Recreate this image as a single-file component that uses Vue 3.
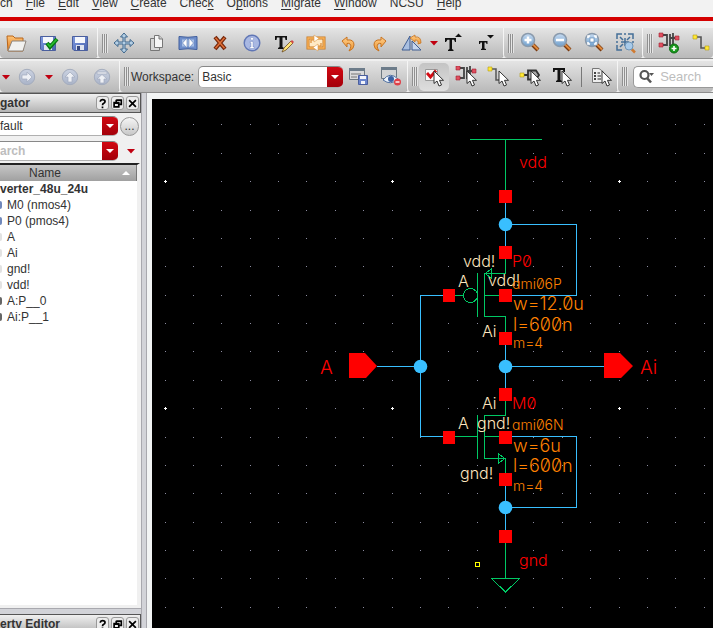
<script setup>
import { ref } from 'vue'

const menus = [
  ['', 'ch', ''], ['', 'F', 'ile'], ['', 'E', 'dit'], ['', 'V', 'iew'], ['', 'C', 'reate'],
  ['Chec', 'k', ''], ['O', 'p', 'tions'], ['', 'M', 'igrate'], ['', 'W', 'indow'],
  ['NCSU', '', ''], ['', 'H', 'elp'],
]
const mainBar = [
  { items: ['open', 'savecheck', 'save'] },
  { grip: true, items: ['move', 'copy', 'stretch', 'delete', 'info', 'edittext', 'repeat', 'undo', 'redo', 'rotate', 'tri', 'textup', 'textdown'] },
  { grip: true, items: ['zoomin', 'zoomout', 'zoomfit', 'zoomsel'] },
  { grip: true, grow: true, items: ['instance', 'wire'] },
]
const navItems = ['tri', 'forward', 'tri', 'up', 'top']
const filterItems = ['fcheck', 'finst', 'fwire', 'fpin', 'ftext']
const tree = [
  ['M0 (nmos4)', 'blue'], ['P0 (pmos4)', 'blue'], ['A', 'pale'], ['Ai', 'pale'], ['gnd!', 'pale'],
  ['vdd!', 'pale'], ['A:P__0', 'dark'], ['Ai:P__1', 'dark'],
]
const workspace = ref('Basic')
const view = ref('fault')
const search = ref('')
const filter = ref('')

const pitch = 28.375
const dots = []
for (let i = 0; i < 60; i++) {
  for (let j = -2; j < 40; j++) {
    dots.push({
      x: Math.floor(165.03 + i * pitch),
      y: Math.floor(181.65 + j * pitch),
      major: i % 8 === 0 && ((j % 8) + 8) % 8 === 0,
    })
  }
}
const squares = [
  [499, 190], [499, 246], [499, 289], [499, 332], [443, 289], [499, 388],
  [443, 431], [499, 431], [499, 473], [499, 530],
]
const nodes = [[505.5, 224.5], [420.5, 366.5], [505.5, 366.5], [505.5, 507.5]]
const labels = [
  ['vdd', 519, 168, 'red'], ['P0', 512, 267, 'red'], ['M0', 512, 409, 'red'], ['gnd', 519, 566, 'red'],
  ['A', 320, 374, 'red big'], ['Ai', 640, 374, 'red big'],
  ['vdd!', 463, 267, 'cream'], ['vdd!', 488, 286, 'cream'], ['A', 458, 287, 'cream'], ['Ai', 482, 337, 'cream'],
  ['Ai', 482, 409, 'cream'], ['A', 458, 429, 'cream'], ['gnd!', 477, 429, 'cream'], ['gnd!', 460, 479, 'cream'],
  ['ami06P', 512, 289, 'orange small'], ['w=12.0u', 513, 310, 'orange'], ['l=600n', 513, 331, 'orange'], ['m=4', 513, 348, 'orange small'],
  ['ami06N', 512, 430, 'orange small'], ['w=6u', 513, 452, 'orange'], ['l=600n', 513, 472, 'orange'], ['m=4', 513, 491, 'orange small'],
]
</script>

<template>
  <div class="app">
    <svg class="defs" aria-hidden="true">
      <defs>
        <linearGradient id="gFolder" x1="0" y1="0" x2="0" y2="1"><stop offset="0" stop-color="#ffc477" /><stop offset="1" stop-color="#e07a1c" /></linearGradient>
        <linearGradient id="gDisk" x1="0" y1="0" x2="1" y2="1"><stop offset="0" stop-color="#7f9ae0" /><stop offset="1" stop-color="#4a64ae" /></linearGradient>
        <linearGradient id="gLens" x1="0" y1="0" x2="0" y2="1"><stop offset="0" stop-color="#c8dcf2" /><stop offset="1" stop-color="#6f9fcc" /></linearGradient>
        <linearGradient id="gPale" x1="0" y1="0" x2="0" y2="1"><stop offset="0" stop-color="#ccd3e2" /><stop offset="1" stop-color="#a9b3c8" /></linearGradient>
        <linearGradient id="gOrange" x1="0" y1="0" x2="0" y2="1"><stop offset="0" stop-color="#ffce8a" /><stop offset="1" stop-color="#ee9630" /></linearGradient>
        <g id="pointer"><path d="M0 0V12.5L3 10L5 15L7.5 14L5.5 9.3H9.5Z" fill="#fff" stroke="#333" stroke-width="1" /></g>
        <g id="lens"><path d="M12 12L18 18" stroke="#7a3a10" stroke-width="4" /><path d="M12.5 12L18 17.5" stroke="#e08a3c" stroke-width="2" /><circle cx="8" cy="8" r="6.5" fill="url(#gLens)" stroke="#8a9aac" stroke-width="1.5" /></g>
        <g id="inst"><path d="M4 4H9V14H4M12 3V15M15 2V16M12 7H20" fill="none" stroke="#444" stroke-width="1.800" /><path d="M1 2h4v4H1zM1 12h4v4H1zM17 5h4v4h-4z" fill="#e05060" stroke="#a02030" stroke-width=".6" /></g>
      </defs>
      <symbol id="i-open" viewBox="0 0 22 22"><path d="M2 4H8L10 6H18V19H3Z" fill="url(#gFolder)" stroke="#b8651a" /><path d="M7 9H21L18 19H3Z" fill="#f1f1ef" stroke="#8d857c" /></symbol>
      <symbol id="i-save" viewBox="0 0 22 22"><path d="M3.500 4.500H18.500V18.500H5L3.500 17Z" fill="url(#gDisk)" stroke="#4b5f9e" /><path d="M6 5H16V11H6Z" fill="#f5f7fc" /><path d="M7 13H15V18H7Z" fill="#dfe4ef" /><path d="M8 14H11V18H8Z" fill="#38487e" /></symbol>
      <symbol id="i-savecheck" viewBox="0 0 22 22"><path d="M3.500 4.500H18.500V18.500H5L3.500 17Z" fill="url(#gDisk)" stroke="#4b5f9e" /><path d="M6 5H16V11H6Z" fill="#f5f7fc" /><path d="M7 13H15V18H7Z" fill="#dfe4ef" /><path d="M10 11L13 15L20 7" fill="none" stroke="#087410" stroke-width="4" /><path d="M10.500 11.500L13 14.500L19.500 7.500" fill="none" stroke="#28c030" stroke-width="1.800" /></symbol>
      <symbol id="i-move" viewBox="0 0 22 22"><path d="M11 1L14.500 5H12V10H17V7.500L21 11L17 14.500V12H12V17H14.500L11 21L7.500 17H10V12H5V14.500L1 11L5 7.500V10H10V5H7.500Z" fill="#b5cfe4" stroke="#3f678c" /></symbol>
      <symbol id="i-copy" viewBox="0 0 22 22"><path d="M5.500 6.500H14.500V18.500H5.500Z" fill="#d8d8d8" stroke="#777" /><path d="M9.500 3.500H14L17.500 7V15.500H9.500Z" fill="#f6f6f6" stroke="#777" /><path d="M14 3.500V7H17.500" fill="#ccc" stroke="#777" /></symbol>
      <symbol id="i-stretch" viewBox="0 0 22 22"><path d="M2 4.500Q11 6 20 4.500V17.500Q11 16 2 17.500Z" fill="#6f8fcb" stroke="#3f5d9c" /><path d="M5 7.500H17V14.500H5Z" fill="#a8c0e6" /><path d="M10 6V16L5.500 11ZM12 6V16L16.500 11Z" fill="#fff" stroke="#5b79b4" stroke-width=".6" /></symbol>
      <symbol id="i-delete" viewBox="0 0 22 22"><path d="M6 5L16 17M16 5L6 17" stroke="#75260a" stroke-width="4" /><path d="M6.500 5.700L15.500 16.300M15.500 5.700L6.500 16.300" stroke="#e07038" stroke-width="1.500" /></symbol>
      <symbol id="i-info" viewBox="0 0 22 22"><circle cx="11" cy="11" r="7.800" fill="#a9b8e2" stroke="#6076b5" stroke-width="1.400" /><circle cx="11" cy="6.800" r="1.500" fill="#fff" stroke="#6076b5" stroke-width=".4" /><path d="M9 9.500H12V15H13.500V16.500H8.500V15H10V10.800H9Z" fill="#fff" stroke="#6076b5" stroke-width=".4" /></symbol>
      <symbol id="i-edittext" viewBox="0 0 22 22"><path d="M2 4H14V8H12.500L12 5.500H9.500V15L11 16V17H5V16L6.500 15V5.500H4L3.500 8H2Z" fill="#111" /><path d="M9 20L11 16L18 9L20 11L13 18Z" fill="#ffe477" stroke="#6b4a20" stroke-width=".8" /><path d="M17.500 9.500L19 8L21 10L19.500 11.500Z" fill="#d24848" /></symbol>
      <symbol id="i-repeat" viewBox="0 0 22 22"><path d="M3 6H19V16H3Z" fill="#ffe9c4" stroke="#c87a24" stroke-width="3" /><path d="M3 6H19V16H3Z" fill="none" stroke="#f9b25a" stroke-width="1.400" /><path d="M6 11V8H10M16 11V14H12" fill="none" stroke="#dd8a30" stroke-width="1.200" /><path d="M9 3L14 6.500L9 10ZM13 12L8 15.500L13 19Z" fill="#fff" stroke="#dd9a4a" stroke-width=".6" /></symbol>
      <symbol id="i-undo" viewBox="0 0 22 22"><path d="M5 9L10 5V8Q17 7 17 13Q17 17 12 19Q15 14 13 12Q12 11 10 11.500V15Z" fill="url(#gOrange)" stroke="#c77321" /></symbol>
      <symbol id="i-redo" viewBox="0 0 22 22"><path d="M17 9L12 5V8Q5 7 5 13Q5 17 10 19Q7 14 9 12Q10 11 12 11.500V15Z" fill="url(#gOrange)" stroke="#c77321" /></symbol>
      <symbol id="i-rotate" viewBox="0 0 22 22"><path d="M1 18L9 4V18Z" fill="#a9bfe0" stroke="#3f5d92" /><path d="M11 9V18H20Z" fill="#c6d5ec" stroke="#3f5d92" /><path d="M9 6L14 3V5Q20 4 20 11L17 12Q18 8 14 8V10Z" fill="url(#gOrange)" stroke="#c77321" stroke-width=".8" /></symbol>
      <symbol id="i-textup" viewBox="0 0 22 22"><path d="M1 6H12V10H11L10 7.800H8V17L9.500 18V19H4V18L5.500 17V7.800H3.500L2 10H1ZM11 5L14.500 1.500L18 5Z" fill="#111" /></symbol>
      <symbol id="i-textdown" viewBox="0 0 22 22"><path d="M3 9H11.500V12H10.500L10 10.500H8.500V16.500L10 17V18H5V17L6 16.500V10.500H4.500L4 12H3ZM11 3H18L14.500 6.500Z" fill="#111" /></symbol>
      <symbol id="i-zoomin" viewBox="0 0 22 22"><use href="#lens" x="1" y="0" /><path d="M5.500 8H12.500M9 4.500V11.500" stroke="#fff" stroke-width="2.500" /></symbol>
      <symbol id="i-zoomout" viewBox="0 0 22 22"><use href="#lens" x="1" y="0" /><path d="M5 8H13" stroke="#fff" stroke-width="2.500" /></symbol>
      <symbol id="i-zoomfit" viewBox="0 0 22 22"><use href="#lens" x="1" y="0" /><path d="M5 6V4H7M11 4H13V6M5 10V12H7M11 12H13V10" fill="none" stroke="#fff" stroke-width="1.600" /><path d="M7 6H11V10H7Z" fill="#fff" stroke="#507fb0" stroke-width=".6" /></symbol>
      <symbol id="i-zoomsel" viewBox="0 0 22 22"><path d="M2 7V2H7M13 2H18V7M2 13V18H7M9 2H11M2 9V11M18 9V11M5 5L8 8M15 5L12 8M5 15L8 12M10 6V14M6 10H14" fill="none" stroke="#446f98" stroke-width="1.500" /><path d="M16.500 17L20 20.500" stroke="#d07a30" stroke-width="2.500" /><circle cx="14" cy="14" r="4" fill="#a9cbea" stroke="#6f94b5" /></symbol>
      <symbol id="i-instance" viewBox="0 0 22 22"><use href="#inst" y="-1" /><circle cx="16" cy="16.500" r="4.500" fill="#1a9a1e" stroke="#0b6a10" /><path d="M13.500 16.500H18.500M16 14V19" stroke="#fff" stroke-width="1.600" /></symbol>
      <symbol id="i-wire" viewBox="0 0 22 22"><path d="M5 5H11V16H18" fill="none" stroke="#555" stroke-width="1.600" /><path d="M3 3H7V7H3ZM15 14H19V18H15Z" fill="#ffe838" stroke="#b39a10" stroke-width=".6" /></symbol>
      <symbol id="i-forward" viewBox="0 0 22 22"><circle cx="11" cy="11" r="7.700" fill="url(#gPale)" stroke="#a4acbd" /><path d="M6 9H11V6L16 11L11 16V13H6Z" fill="#eef0f5" stroke="#a2aabd" stroke-width=".7" /></symbol>
      <symbol id="i-up" viewBox="0 0 22 22"><circle cx="11" cy="11" r="7.700" fill="url(#gPale)" stroke="#a4acbd" /><path d="M9 16V11H6L11 6L16 11H13V16Z" fill="#eef0f5" stroke="#a2aabd" stroke-width=".7" /></symbol>
      <symbol id="i-top" viewBox="0 0 22 22"><circle cx="11" cy="11" r="7.700" fill="url(#gPale)" stroke="#a4acbd" /><path d="M6 6H16V8H6ZM9 17V13H6L11 8.500L16 13H13V17Z" fill="#eef0f5" stroke="#a2aabd" stroke-width=".7" /></symbol>
      <symbol id="i-wssave" viewBox="0 0 22 22"><path d="M1.500 2.500H16.500V13.500H1.500Z" fill="#d9dadb" stroke="#6d7882" /><path d="M1 2H17V5H1Z" fill="#6d7c8a" /><path d="M3 8H13M3 11H9" stroke="#777" /><path d="M10.500 9.500H19.500V18.500H10.500Z" fill="#6c86cd" stroke="#4b5f9e" /><path d="M12 10H18V13H12ZM13 15H17V18H13Z" fill="#f2f4fa" /></symbol>
      <symbol id="i-wshide" viewBox="0 0 22 22"><path d="M1.500 1.500H16.500V12.500H1.500Z" fill="#d3d4d5" stroke="#6d7882" /><path d="M1 1H17V4H1Z" fill="#6d7c8a" /><path d="M3 14Q10 5 18 13Q11 20 3 14Z" fill="#eef4fb" stroke="#5070a0" /><circle cx="11" cy="13" r="3" fill="#3d62a4" /><circle cx="17.500" cy="16" r="3.500" fill="#df4048" /><path d="M15.500 16H19.500" stroke="#fff" stroke-width="1.400" /></symbol>
      <symbol id="i-fcheck" viewBox="0 0 22 22"><path d="M2.500 3.500H14.500V14.500H2.500Z" fill="#fafafa" stroke="#999" /><path d="M4 7L7.500 11L13 4.500" fill="none" stroke="#d40c14" stroke-width="2.800" /><use href="#pointer" x="11" y="5" /></symbol>
      <symbol id="i-finst" viewBox="0 0 22 22"><use href="#inst" y="-2" /><use href="#pointer" x="12" y="5" /></symbol>
      <symbol id="i-fwire" viewBox="0 0 22 22"><path d="M3 3H9V14H12" fill="none" stroke="#555" stroke-width="1.500" /><path d="M1 1H5V5H1Z" fill="#ffe838" stroke="#b39a10" stroke-width=".6" /><use href="#pointer" x="12" y="5" /></symbol>
      <symbol id="i-fpin" viewBox="0 0 22 22"><path d="M4 9H9" stroke="#333" stroke-width="2" /><path d="M9 4.500H17L20 9L17 13.500H9Z" fill="#aaa" stroke="#333" stroke-width="1.800" /><path d="M1 7H5V11H1Z" fill="#ffe838" stroke="#b39a10" stroke-width=".6" /><use href="#pointer" x="12" y="5" /></symbol>
      <symbol id="i-ftext" viewBox="0 0 22 22"><path d="M2 2H14V6H12.500L12 4H9.500V14L11 15V16H5V15L6.500 14V4H4L3.500 6H2Z" fill="#111" /><use href="#pointer" x="11" y="5" /></symbol>
      <symbol id="i-flist" viewBox="0 0 22 22"><path d="M2.500 2.500H9L13.500 6V16.500H2.500Z" fill="#eee" stroke="#777" /><path d="M4 6H6V8H4ZM4 9H6V11H4ZM4 12H6V14H4Z" fill="#444" /><path d="M7.500 7H10M7.500 10H11M7.500 13H11" stroke="#666" stroke-width="1.400" /><use href="#pointer" x="12" y="5" /></symbol>
      <symbol id="i-tri" viewBox="0 0 22 22"><path d="M7 9H15L11 13.500Z" fill="#c00010" /></symbol>
    </svg>

    <nav class="menubar">
      <a v-for="m in menus" :key="m.join('')" href="#">{{ m[0] }}<span :class="{ key: m[1].length === 1 }">{{ m[1] }}</span>{{ m[2] }}</a>
    </nav>

    <div class="toolbar">
      <div v-for="(g, gi) in mainBar" :key="gi" class="group" :class="{ grow: g.grow, first: !g.grip }">
        <span v-if="g.grip" class="grip"></span>
        <button v-for="i in g.items" :key="i" class="tool" :class="{ narrow: i === 'tri' }" :aria-label="i">
          <svg><use :href="'#i-' + i" /></svg>
        </button>
      </div>
    </div>

    <div class="toolbar second">
      <div class="group first">
        <button v-for="(i, n) in navItems" :key="n" class="tool" :class="{ narrow: i === 'tri' }" :aria-label="i">
          <svg><use :href="'#i-' + i" /></svg>
        </button>
      </div>
      <div class="group">
        <span class="grip"></span>
        <label class="wslabel" for="ws">Workspace:</label>
        <span class="combo ws">
          <select id="ws" v-model="workspace"><option>Basic</option></select>
          <span class="drop"></span>
        </span>
        <button class="tool" aria-label="wssave"><svg><use href="#i-wssave" /></svg></button>
        <button class="tool" aria-label="wshide"><svg><use href="#i-wshide" /></svg></button>
      </div>
      <div class="group">
        <span class="grip"></span>
        <button v-for="i in filterItems" :key="i" class="tool" :class="{ active: i === 'fcheck' }" :aria-label="i">
          <svg><use :href="'#i-' + i" /></svg>
        </button>
        <span class="rule"></span>
        <button class="tool" aria-label="flist"><svg><use href="#i-flist" /></svg></button>
      </div>
      <div class="group grow">
        <span class="grip"></span>
        <label class="search">
          <svg viewBox="0 0 18 16"><circle cx="6.500" cy="6" r="4" fill="none" stroke="#555" stroke-width="2.200" /><path d="M9 9L13 13.500" stroke="#555" stroke-width="2.600" /><path d="M11 4H16L13.500 7Z" fill="#555" /></svg>
          <input v-model="search" type="text" placeholder="Search" aria-label="Search">
        </label>
      </div>
    </div>

    <div class="main">
      <aside class="dock">
        <header class="title">
          <h2>gator</h2>
          <button aria-label="help"><svg viewBox="0 0 13 13"><path d="M4 4.500V3.500Q4.500 2 6.500 2Q9.500 2 9.500 4.200Q9.500 5.500 8 6.300Q6.500 7 6.500 8.500M6.500 10V12" /></svg></button>
          <button aria-label="float"><svg viewBox="0 0 13 13"><path d="M5 2.500H11V7.500H9M5 2V5M2.500 5.500H8V10.500H2.500ZM2 6H9" /></svg></button>
          <button aria-label="close"><svg viewBox="0 0 13 13"><path d="M2.500 2.500L10.500 10.500M10.500 2.500L2.500 10.500" /></svg></button>
        </header>
        <div class="controls">
          <div class="line">
            <span class="combo">
              <select v-model="view" aria-label="View"><option>fault</option></select>
              <span class="drop"></span>
            </span>
            <button class="more" aria-label="more">...</button>
          </div>
          <div class="line">
            <span class="combo">
              <input v-model="filter" type="text" placeholder="arch" aria-label="Filter">
              <span class="drop"></span>
            </span>
            <button class="tool narrow" aria-label="options"><svg><use href="#i-tri" /></svg></button>
          </div>
        </div>
        <div class="treebox">
          <div class="thead"><span>Name</span><i></i></div>
          <ul>
            <li class="root">verter_48u_24u</li>
            <li v-for="t in tree" :key="t[0]"><i :class="t[1]"></i>{{ t[0] }}</li>
          </ul>
        </div>
        <div class="hsplit"></div>
        <header class="title bottom">
          <h2>erty Editor</h2>
          <button aria-label="help"><svg viewBox="0 0 13 13"><path d="M4 4.500V3.500Q4.500 2 6.500 2Q9.500 2 9.500 4.200Q9.500 5.500 8 6.300Q6.500 7 6.500 8.500M6.500 10V12" /></svg></button>
          <button aria-label="float"><svg viewBox="0 0 13 13"><path d="M5 2.500H11V7.500H9M5 2V5M2.500 5.500H8V10.500H2.500ZM2 6H9" /></svg></button>
          <button aria-label="close"><svg viewBox="0 0 13 13"><path d="M2.500 2.500L10.500 10.500M10.500 2.500L2.500 10.500" /></svg></button>
        </header>
      </aside>
      <div class="vsplit"></div>
      <section class="canvas">
        <svg>
          <g transform="translate(-152 -99)">
            <g shape-rendering="crispEdges">
              <template v-for="(d, n) in dots" :key="n">
                <path v-if="d.major" :d="`M${d.x - 1} ${d.y}h3v1h-3zM${d.x} ${d.y - 1}h1v3h-1z`" fill="#fff" />
                <rect v-else :x="d.x" :y="d.y" width="1" height="1" fill="#8c8ca0" />
              </template>
            </g>
            <g class="wire" shape-rendering="crispEdges">
              <path d="M505.500 202V246M505.500 224.500H576.500V295.500H512M443 295.500H420.500V436.500H443M377 366.500H420M505.500 344V388M505.500 366.500H604M512 436.500H576.500V507.500H505.500M505.500 486V530" />
            </g>
            <g class="symbol" shape-rendering="crispEdges">
              <path d="M470 139.500H542M505.500 139V190M505.500 259V273.500H484.500V316.500H505.500V332M484 295.500H499M477.500 273V317M455 295.500H463M491.500 269V278L485 273.500Z" />
              <path d="M505.500 401V415.500H484.500V458.500H505.500V473M484 436.500H499M477.500 415V459M455 436.500H477M498.500 454V463L505 458.500Z" />
              <path d="M505.500 542V578M491.500 578.500H519.500L505.500 592Z" />
              <circle cx="470.500" cy="295.500" r="7" />
            </g>
            <rect v-for="(s, n) in squares" :key="'s' + n" :x="s[0]" :y="s[1]" :width="s[0] === 443 ? 12 : 13" height="12.500" fill="#f00" shape-rendering="crispEdges" />
            <circle v-for="(c, n) in nodes" :key="'c' + n" :cx="c[0]" :cy="c[1]" r="6.800" fill="#39bfff" />
            <path d="M349 353H365L377 366L366 378H349ZM604 353H620L633 366L621 378H604Z" fill="#f00" />
            <path d="M475 562H480V567H475ZM476 563V566H479V563Z" fill="#ffff00" fill-rule="evenodd" shape-rendering="crispEdges" />
            <text v-for="(l, n) in labels" :key="'t' + n" :x="l[1]" :y="l[2]" :class="l[3]">{{ l[0] }}</text>
          </g>
        </svg>
      </section>
    </div>
  </div>
</template>

<style>
body { margin: 0; background: #f0f0f0; }
</style>

<style scoped>
.app { display: flex; flex-direction: column; height: 100vh; overflow: hidden; background: #f0f0f0; color: #333; font: 12px/16px "Liberation Sans", Arial, sans-serif; }
.defs { position: absolute; width: 0; height: 0; }
button { padding: 0; border: 0; background: none; font: inherit; color: inherit; }
.menubar { display: flex; flex: none; gap: 13px; height: 17px; overflow: hidden; background: #f2f2f2; border-bottom: 4px solid #d40000; }
.menubar a { margin-top: -5px; color: #333; text-decoration: none; white-space: nowrap; }
.key { text-decoration: underline; text-underline-offset: 2px; }
.toolbar { display: flex; flex: none; height: 30px; margin-top: 7px; border-bottom: 1px solid #8c8c8c; }
.second { margin-top: 2px; height: 31px; }
.group { display: flex; flex: none; align-items: center; box-sizing: border-box; padding-left: 4px; border-left: 1px solid #f5f5f5; border-right: 1px solid #a4a4a4; border-radius: 0 0 4px 4px; margin-right: -1px; background: linear-gradient(#e4e4e4, #b9b9b9); }
.group.first { padding: 0 1px 0 0; border-left: 0; }
.group.grow { flex: 1; min-width: 0; margin-right: 0; border-right: 0; overflow: hidden; }
.grip { flex: none; width: 6px; height: 19px; background: repeating-linear-gradient(90deg, #909090 0 1px, #e6e6e6 1px 2px); }
.tool { display: flex; flex: none; align-items: center; justify-content: center; width: 32px; height: 28px; }
.tool svg { flex: none; width: 22px; height: 22px; }
.tool.narrow { width: 11px; }
.tool.active { width: 30px; margin: 0 1px; border-radius: 5px; background: linear-gradient(#c4c4c4, #dedede); }
.rule { width: 1px; height: 20px; margin: 0 3px; background: #777; }
.wslabel { padding: 0 4px 0 1px; }
.combo { display: flex; flex: none; width: 118px; height: 20px; overflow: hidden; box-sizing: border-box; border-radius: 0 5px 5px 0; background: #fff; border-top: 1px solid #888; border-bottom: 1px solid #b0b0b0; }
.combo select, .combo input { flex: 1; min-width: 0; padding: 0; border: 0; outline: 0; background: none; appearance: none; font: inherit; color: #333; }
.combo.ws { width: 145px; height: 22px; border-radius: 5px; border-left: 1px solid #999; }
.combo.ws select { padding-left: 3px; }
.drop { display: flex; align-items: center; justify-content: center; width: 16px; background: linear-gradient(#d20812, #a3000a); }
.drop::after { content: ""; border: 4px solid transparent; border-top-color: #fff; border-bottom: 0; }
input::placeholder { color: #bdbdbd; font-weight: bold; opacity: 1; }
.search { display: flex; flex: 1; align-items: center; height: 20px; margin-left: 5px; border: 1px solid #999; border-right: 0; border-radius: 5px 0 0 5px; background: #fff; }
.search svg { flex: none; width: 18px; height: 16px; margin: 0 4px; }
.search input { flex: 1; min-width: 0; padding: 0; border: 0; outline: 0; background: none; font: 13px "Liberation Sans", Arial, sans-serif; }
.search input::placeholder { font-weight: normal; }
.main { display: flex; flex: 1; min-height: 0; }
.dock { display: flex; flex: none; flex-direction: column; width: 141px; overflow: hidden; }
.title { display: flex; flex: none; align-items: center; gap: 2px; height: 18px; padding-right: 1px; border: 1px solid #555; border-left: 0; background: linear-gradient(#f0f0f0, #b4b4b4); }
.title h2 { flex: 1; margin: 0; font-size: 12px; }
.title button { width: 13px; height: 14px; box-sizing: border-box; border: 1px solid #999; border-radius: 3px; background: #ececec; }
.title svg { display: block; width: 11px; height: 11px; fill: none; stroke: #000; stroke-width: 2; }
.bottom { margin-bottom: -6px; }
.controls { display: flex; flex-direction: column; gap: 5px; padding: 3px 0 2px; }
.line { display: flex; align-items: center; }
.line .narrow { height: 20px; margin-left: 7px; }
.more { width: 19px; height: 19px; margin-left: 2px; box-sizing: border-box; border: 1px solid #999; border-radius: 50%; background: linear-gradient(#f4f4f4, #c8c8c8); line-height: 14px; }
.treebox { flex: 1; min-height: 0; margin-right: 1px; border-top: 2px solid #222; border-right: 3px solid #f0f0f0; border-bottom: 3px solid #f0f0f0; background: #fff; }
.thead { display: flex; align-items: center; height: 16px; border-right: 1px solid #777; background: linear-gradient(#c6c6c6, #a0a0a0); }
.thead span { flex: 1; padding-right: 46px; text-align: center; }
.thead i { margin: 0 6px 0 -14px; border: 4px solid transparent; border-bottom-color: #fff; border-top: 0; }
ul { margin: 0; padding: 0; list-style: none; }
li { display: flex; align-items: center; gap: 5px; height: 16px; white-space: nowrap; }
li i { width: 2px; height: 8px; border-radius: 0 2px 2px 0; }
.root { font-weight: bold; }
.blue { background: #7088bb; }
.pale { background: #e2e2e2; }
.dark { background: #666; }
.hsplit { flex: none; height: 5px; border-top: 1px solid #a8a8ae; background: #d2d3d8; }
.vsplit { flex: none; width: 4px; border-left: 1px solid #a8a8ae; border-right: 1px solid #a8a8ae; background: #d2d3d8; }
.canvas { flex: 1; min-width: 0; padding: 6px 0 0 5px; background: #f2f4f4; }
.canvas svg { display: block; width: 100%; height: 100%; background: #000; }
.wire path { fill: none; stroke: #39bfff; }
.symbol { fill: none; stroke: #00c864; }
text { font: 300 16px Inter, "Noto Sans", sans-serif; font-feature-settings: "zero", "cv11"; }
.red { fill: #f00; }
.cream { fill: #ffe6bf; }
.orange { fill: #ff8000; font-size: 18px; }
.small { font-size: 14px; }
.big { font-size: 19px; }
</style>
